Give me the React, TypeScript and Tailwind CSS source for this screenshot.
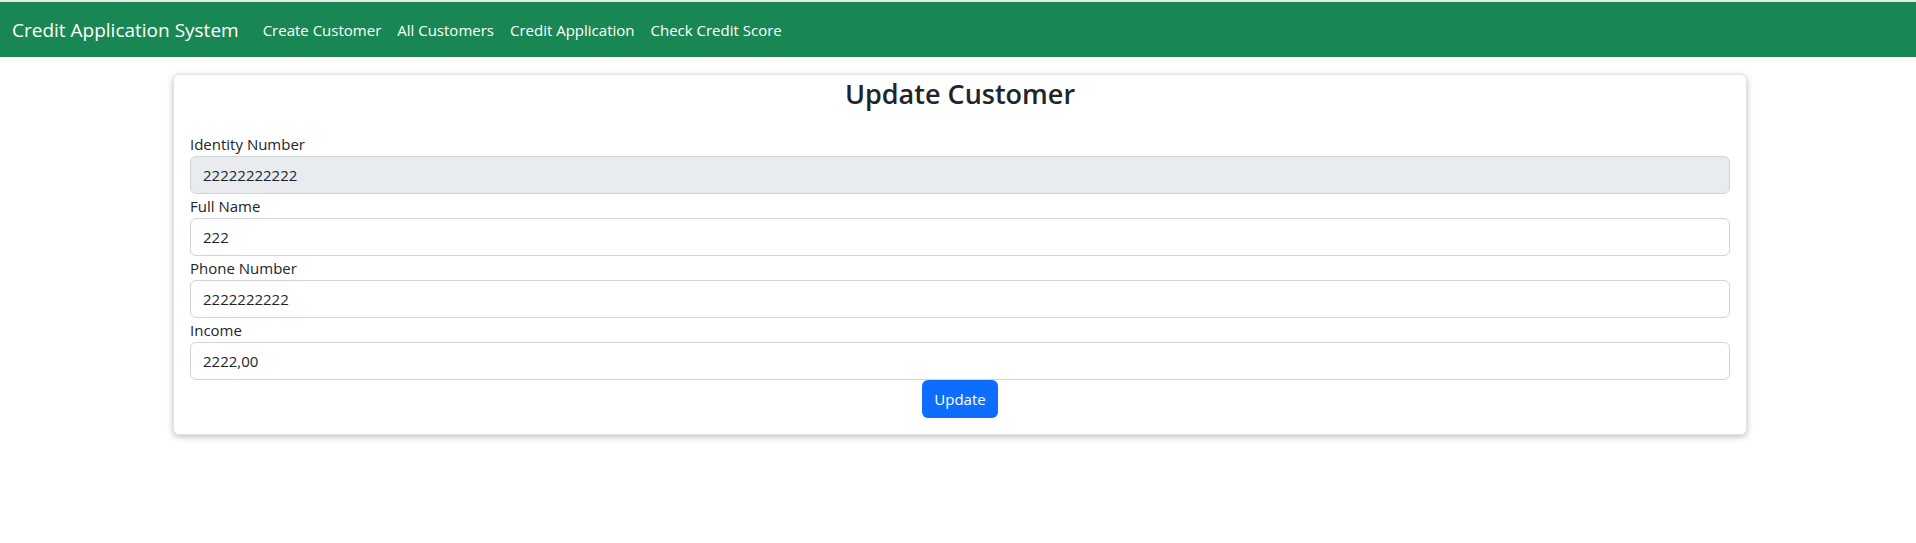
import React from 'react';

const fields = [
  { label: 'Identity Number', value: '22222222222', disabled: true },
  { label: 'Full Name', value: '222', disabled: false },
  { label: 'Phone Number', value: '2222222222', disabled: false },
  { label: 'Income', value: '2222,00', disabled: false },
];

const links = ['Create Customer', 'All Customers', 'Credit Application', 'Check Credit Score'];

const App: React.FC = () => {
  return (
    <div className="min-h-[543px] bg-white text-[#212529] font-['Open_Sans',sans-serif]">
      <div className="h-[2px] bg-[#e6e6e6]"></div>
      {/* Navbar */}
      <nav className="h-[55px] bg-[#198754] flex items-center px-3">
        <span className="text-[19px] text-white mr-4 leading-[30px]">Credit Application System</span>
        <div className="flex items-center">
          {links.map((l) => (
            <a key={l} className="px-2 text-[15px] text-white leading-6">{l}</a>
          ))}
        </div>
      </nav>

      {/* Card */}
      <div className="ml-[173px] mt-[17px] w-[1574px] bg-white border border-[#e3e3e3] rounded-md shadow-[0_2px_6px_rgba(0,0,0,0.25)] px-4 pt-[2px] pb-4">
        <h3 className="text-center text-[27px] font-semibold leading-[34px] mb-[21px]">Update Customer</h3>
        {fields.map((f) => (
          <div key={f.label}>
            <label className="block text-[15px] leading-6">{f.label}</label>
            <div
              className={`h-[38px] border border-[#ced4da] rounded-md px-3 flex items-center text-[15px] ${
                f.disabled ? 'bg-[#e9ecef]' : 'bg-white'
              }`}
            >
              {f.value}
            </div>
          </div>
        ))}
        <div className="flex justify-center">
          <button className="h-[38px] px-3 bg-[#0d6efd] text-white text-[15px] rounded-md">Update</button>
        </div>
      </div>
    </div>
  );
};

export default App;
